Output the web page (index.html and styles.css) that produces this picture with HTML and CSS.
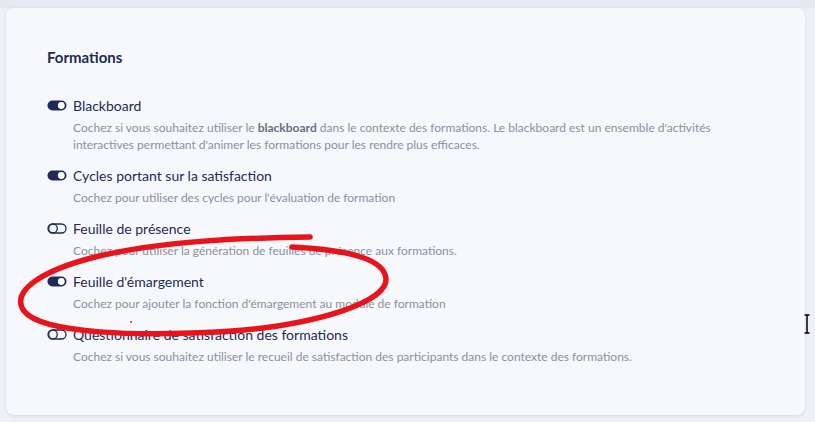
FILE: index.html
```html
<!DOCTYPE html>
<html lang="fr">
<head>
    <meta charset="UTF-8">
    <title>Paramètres - Formations</title>
    <link rel="stylesheet" href="styles.css">
</head>
<body>
    <div class="topbar"></div>
    <div class="card">
        <h2 class="card-title">Formations</h2>

        <div class="option">
            <div class="option-head">
                <svg class="toggle" viewBox="0 0 20 11"><rect x="0.5" y="0.5" width="19" height="10" rx="5" fill="#1f2a56"/><circle cx="14.3" cy="5.5" r="3.4" fill="#fff"/></svg>
                <span class="option-label">Blackboard</span>
            </div>
            <p class="option-desc">Cochez si vous souhaitez utiliser le <b>blackboard</b> dans le contexte des formations. Le blackboard est un ensemble d'activités interactives permettant d'animer les formations pour les rendre plus efficaces.</p>
        </div>

        <div class="option">
            <div class="option-head">
                <svg class="toggle" viewBox="0 0 20 11"><rect x="0.5" y="0.5" width="19" height="10" rx="5" fill="#1f2a56"/><circle cx="14.3" cy="5.5" r="3.4" fill="#fff"/></svg>
                <span class="option-label">Cycles portant sur la satisfaction</span>
            </div>
            <p class="option-desc">Cochez pour utiliser des cycles pour l'évaluation de formation</p>
        </div>

        <div class="option">
            <div class="option-head">
                <svg class="toggle" viewBox="0 0 20 11"><rect x="1" y="1" width="18" height="9" rx="4.5" fill="none" stroke="#1f2a56" stroke-width="1.3"/><circle cx="6" cy="5.5" r="4.3" fill="none" stroke="#1f2a56" stroke-width="1.3"/></svg>
                <span class="option-label">Feuille de présence</span>
            </div>
            <p class="option-desc">Cochez pour utiliser la génération de feuilles de présence aux formations.</p>
        </div>

        <div class="option">
            <div class="option-head">
                <svg class="toggle" viewBox="0 0 20 11"><rect x="0.5" y="0.5" width="19" height="10" rx="5" fill="#1f2a56"/><circle cx="14.3" cy="5.5" r="3.4" fill="#fff"/></svg>
                <span class="option-label">Feuille d'émargement</span>
            </div>
            <p class="option-desc">Cochez pour ajouter la fonction d'émargement au module de formation</p>
        </div>

        <div class="option">
            <div class="option-head">
                <svg class="toggle" viewBox="0 0 20 11"><rect x="1" y="1" width="18" height="9" rx="4.5" fill="none" stroke="#1f2a56" stroke-width="1.3"/><circle cx="6" cy="5.5" r="4.3" fill="none" stroke="#1f2a56" stroke-width="1.3"/></svg>
                <span class="option-label">Questionnaire de satisfaction des formations</span>
            </div>
            <p class="option-desc">Cochez si vous souhaitez utiliser le recueil de satisfaction des participants dans le contexte des formations.</p>
        </div>
    </div>

    <!-- annotation rouge dessinée à la main -->
    <svg class="scribble" width="815" height="422" viewBox="0 0 815 422">
        <path d="M310 237 C 240 238, 160 241, 95 257 C 40 271, 10 292, 24 311 C 42 334, 140 337, 232 331 C 322 324, 387 301, 386 279 C 385 260, 352 250, 292 247" fill="none" stroke="#e8141c" stroke-width="5.5" stroke-linecap="round"/>
        <circle cx="131" cy="322" r="1" fill="#e8141c"/>
    </svg>

    <!-- curseur texte -->
    <svg class="cursor" width="6" height="20" viewBox="0 0 6 20">
        <path d="M0.5 1 H5.5 M3 1 V19 M0.5 19 H5.5" stroke="#000" stroke-width="1.5" fill="none"/>
    </svg>
</body>
</html>
```

FILE: styles.css
```css
body {
    margin: 0;
    background-color: #edf0f6;
    font-family: Lato, "Noto Sans", sans-serif;
    height: 422px;
    overflow: hidden;
}

.topbar {
    height: 7px;
    background: #e6e9f0;
    box-shadow: 0 1px 2px rgba(0,0,0,0.05);
}

.card {
    margin: 1px 10px 0 6px;
    height: 407px;
    box-sizing: border-box;
    padding: 40px 41px;
    background: #f6f8fc;
    border-radius: 8px;
    box-shadow: 0 1px 3px rgba(30,40,80,0.12);
}

.card-title {
    margin: 0 0 31px;
    font-size: 15px;
    font-weight: 700;
    color: #1f2a56;
}

.option {
    margin-bottom: 14px;
}

.option-head {
    display: flex;
    align-items: center;
    gap: 6px;
}

.toggle {
    width: 20px;
    height: 11px;
    flex-shrink: 0;
}

.option-label {
    font-size: 14px;
    color: #1f2a56;
}

.option-desc {
    margin: 5px 0 0 26px;
    font-size: 12px;
    line-height: 17px;
    color: #8b90a0;
    max-width: 660px;
}

.option-desc b {
    color: #6a6f80;
}

.scribble {
    position: absolute;
    left: 0;
    top: 0;
    pointer-events: none;
}

.cursor {
    position: absolute;
    left: 804px;
    top: 314px;
}
```
